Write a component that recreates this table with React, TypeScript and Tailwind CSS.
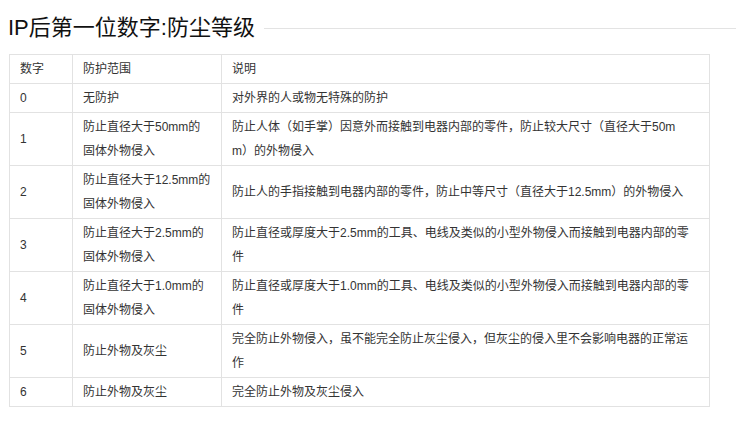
import React from 'react';

const rows: { num: string; scope: string[]; desc: string[] }[] = [
  { num: '0', scope: ['无防护'], desc: ['对外界的人或物无特殊的防护'] },
  {
    num: '1',
    scope: ['防止直径大于50mm的', '固体外物侵入'],
    desc: ['防止人体（如手掌）因意外而接触到电器内部的零件，防止较大尺寸（直径大于50m', 'm）的外物侵入'],
  },
  {
    num: '2',
    scope: ['防止直径大于12.5mm的', '固体外物侵入'],
    desc: ['防止人的手指接触到电器内部的零件，防止中等尺寸（直径大于12.5mm）的外物侵入'],
  },
  {
    num: '3',
    scope: ['防止直径大于2.5mm的', '固体外物侵入'],
    desc: ['防止直径或厚度大于2.5mm的工具、电线及类似的小型外物侵入而接触到电器内部的零', '件'],
  },
  {
    num: '4',
    scope: ['防止直径大于1.0mm的', '固体外物侵入'],
    desc: ['防止直径或厚度大于1.0mm的工具、电线及类似的小型外物侵入而接触到电器内部的零', '件'],
  },
  {
    num: '5',
    scope: ['防止外物及灰尘'],
    desc: ['完全防止外物侵入，虽不能完全防止灰尘侵入，但灰尘的侵入里不会影响电器的正常运', '作'],
  },
  { num: '6', scope: ['防止外物及灰尘'], desc: ['完全防止外物及灰尘侵入'] },
];

function Lines({ lines }: { lines: string[] }) {
  return (
    <>
      {lines.map((l, i) => (
        <div key={i} className="whitespace-nowrap">
          {l}
        </div>
      ))}
    </>
  );
}

export default function App() {
  return (
    <div
      className="w-[750px] h-[425px] bg-white text-[#333] pt-3"
      style={{ fontFamily: '"Liberation Sans", "Noto Sans CJK SC", sans-serif' }}
    >
      <div className="flex items-center pl-2 pr-[14px]">
        <h2 className="text-[22px] leading-[32px] text-[#111] font-normal">IP后第一位数字:防尘等级</h2>
        <div className="flex-1 ml-[9px] h-px bg-[#e3e3e3]" />
      </div>

      <table className="ml-[9px] mt-[10px] w-[701px] border-collapse table-fixed text-[12px] leading-[24px]">
        <colgroup>
          <col className="w-[63px]" />
          <col className="w-[149px]" />
          <col />
        </colgroup>
        <thead>
          <tr>
            <th className="border border-[#e2e2e2] px-[10px] py-[2px] text-left font-normal">数字</th>
            <th className="border border-[#e2e2e2] px-[10px] py-[2px] text-left font-normal">防护范围</th>
            <th className="border border-[#e2e2e2] px-[10px] py-[2px] text-left font-normal">说明</th>
          </tr>
        </thead>
        <tbody>
          {rows.map((r) => (
            <tr key={r.num}>
              <td className="border border-[#e2e2e2] px-[10px] py-[2px] align-middle">{r.num}</td>
              <td className="border border-[#e2e2e2] px-[10px] py-[2px] align-middle">
                <Lines lines={r.scope} />
              </td>
              <td className="border border-[#e2e2e2] px-[10px] py-[2px] align-middle">
                <Lines lines={r.desc} />
              </td>
            </tr>
          ))}
        </tbody>
      </table>
    </div>
  );
}
